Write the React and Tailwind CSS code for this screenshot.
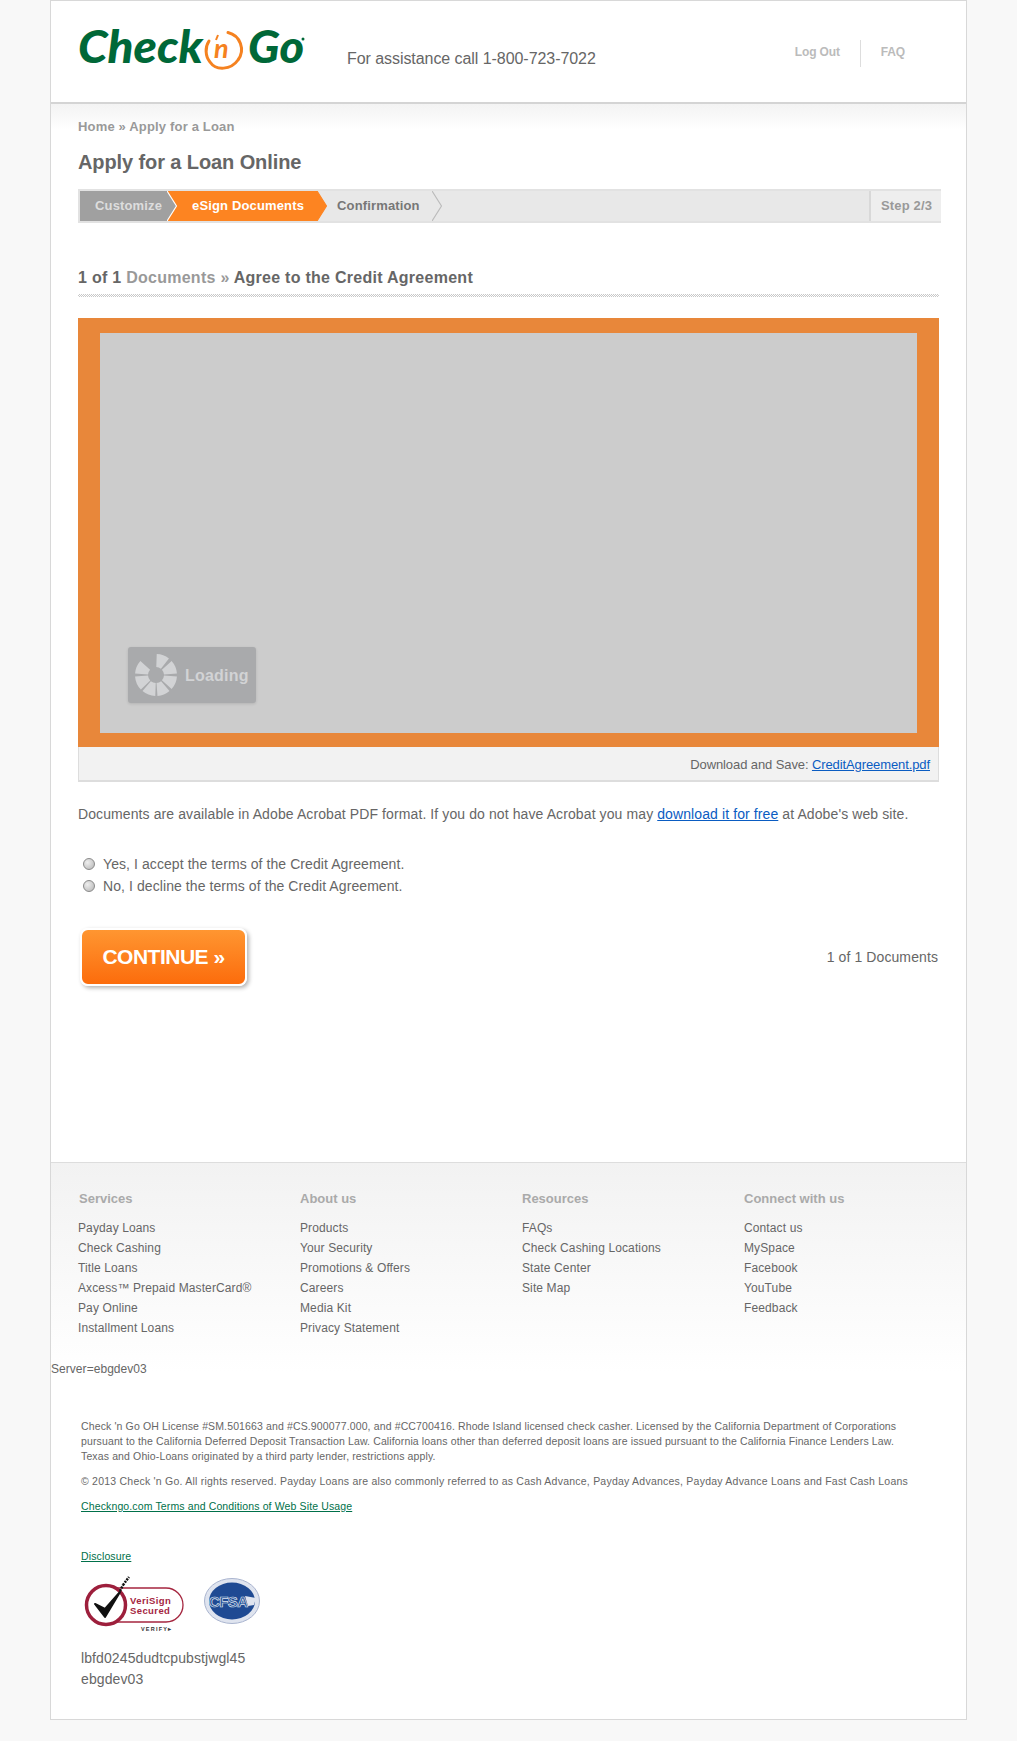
import React from 'react';

const footerColumns = [
  { title: 'Services', indent: 'pl-[1px]', links: ['Payday Loans', 'Check Cashing', 'Title Loans', 'Axcess™ Prepaid MasterCard®', 'Pay Online', 'Installment Loans'] },
  { title: 'About us', indent: '', links: ['Products', 'Your Security', 'Promotions & Offers', 'Careers', 'Media Kit', 'Privacy Statement'] },
  { title: 'Resources', indent: '', links: ['FAQs', 'Check Cashing Locations', 'State Center', 'Site Map'] },
  { title: 'Connect with us', indent: '', links: ['Contact us', 'MySpace', 'Facebook', 'YouTube', 'Feedback'] },
];

const Logo = () => (
  <svg width="232" height="44" viewBox="0 0 232 44" aria-label="Check n Go" className="overflow-visible">
    <text x="0" y="36" fontFamily="Lato, 'Open Sans', sans-serif" fontWeight="900" fontStyle="italic" fontSize="46" textLength="125" lengthAdjust="spacingAndGlyphs" fill="#006838">Check</text>
    <path d="M150 5.5 A17.5 17.5 0 0 1 160 33 C153 43 138 44 132 35 C127 29 127 20 131 14" fill="none" stroke="#f58220" strokeWidth="3" strokeLinecap="round" />
    <text x="136" y="31" fontFamily="Lato, 'Open Sans', sans-serif" fontWeight="700" fontStyle="italic" fontSize="27" fill="#f58220">n</text>
    <path d="M140 8 L138 13" stroke="#f58220" strokeWidth="2" />
    <text x="170" y="36" fontFamily="Lato, 'Open Sans', sans-serif" fontWeight="900" fontStyle="italic" fontSize="46" textLength="56" lengthAdjust="spacingAndGlyphs" fill="#006838">Go</text>
    <circle cx="225" cy="12" r="1.5" fill="#006838" />
  </svg>
);

const Chevron = ({ fill, bg, stroke }) => (
  <svg width="10" height="30" viewBox="0 0 10 30" className="shrink-0" style={{ background: bg }}>
    <path d="M0 0 L9.5 15 L0 30 Z" fill={fill} />
    <path d="M0 0 L9.5 15 L0 30" fill="none" stroke={stroke} strokeWidth="1.2" />
  </svg>
);

const Spinner = () => {
  const arcs = [[2, 38], [48, 86], [94, 132], [140, 176], [182, 220], [226, 266], [274, 312]];
  const point = (deg, r) => {
    const rad = ((deg - 90) * Math.PI) / 180;
    return `${21 + r * Math.cos(rad)} ${21 + r * Math.sin(rad)}`;
  };
  return (
    <svg width="42" height="42" viewBox="0 0 42 42">
      {arcs.map(([a, b]) => (
        <path key={a} d={`M${point(a, 14.5)} A14.5 14.5 0 0 1 ${point(b, 14.5)}`} fill="none" stroke="#d2d3d5" strokeWidth="13" />
      ))}
    </svg>
  );
};

const VeriSign = () => (
  <svg width="100" height="58" viewBox="0 0 100 58">
    <path d="M30 12 H82 A17 17 0 0 1 82 46 H30" fill="#fff" stroke="#a5263f" strokeWidth="1.3" />
    <circle cx="22" cy="29" r="19.5" fill="#fff" stroke="#9d1f3c" strokeWidth="3.5" />
    <path d="M11 28 L21 41 L36 16 L21 33 Z" fill="#111" stroke="#111" strokeWidth="2" strokeLinejoin="round" />
    <path d="M36 15 L39 9 M39 9 L45 1" stroke="#111" strokeWidth="2.5" strokeDasharray="2 1" />
    <text x="46" y="28" fontFamily="'Liberation Sans', sans-serif" fontWeight="700" fontSize="9.5" letterSpacing="0.4" fill="#a5263f">VeriSign</text>
    <text x="46" y="38" fontFamily="'Liberation Sans', sans-serif" fontWeight="700" fontSize="9.5" letterSpacing="0.4" fill="#a5263f">Secured</text>
    <text x="57" y="55" fontFamily="'Liberation Sans', sans-serif" fontWeight="700" fontSize="5.5" letterSpacing="1.2" fill="#333">VERIFY▸</text>
  </svg>
);

const Cfsa = () => (
  <svg width="56" height="46" viewBox="0 0 56 46">
    <ellipse cx="28" cy="23" rx="27.5" ry="22.5" fill="#dfe4ef" stroke="#a9b4cf" />
    <ellipse cx="28" cy="23" rx="23" ry="18.5" fill="#1f4a93" />
    <text x="5" y="29" fontFamily="'Liberation Sans', sans-serif" fontWeight="700" fontSize="15" letterSpacing="-0.6" fill="#1f4a93" stroke="#dfe4ef" strokeWidth="0.7">CFSA</text>
    <path d="M41 18 L52 20 L50 27 L44 28 Z" fill="#dfe4ef" />
  </svg>
);

const App = () => {
  return (
    <div className="min-h-[1741px] bg-[#f8f8f8] font-['Liberation_Sans',Arial,sans-serif] text-[#666]">
      <div className="ml-[50px] w-[917px] h-[1720px] border border-[#d8d8d8] bg-white">
        {/* Header */}
        <header className="h-[103px] border-b-2 border-[#d4d4d4] flex items-start">
          <div className="ml-[27px] mt-[26px] w-[269px]">
            <Logo />
          </div>
          <p className="mt-[48px] text-base leading-[20px] tracking-[-0.06px] text-[#666]">For assistance call 1-800-723-7022</p>
          <nav className="ml-auto mr-[61px] mt-[39px] flex items-start text-xs font-bold tracking-[-0.15px] text-[#bbb]">
            <a className="mt-[5px] leading-[14px]">Log Out</a>
            <span className="w-px h-[27px] bg-[#ddd] mx-[20px]"></span>
            <a className="mt-[5px] leading-[14px]">FAQ</a>
          </nav>
        </header>

        {/* Main content */}
        <main className="h-[1058px] px-[27px] bg-[linear-gradient(#f3f3f3,#fff_26px)]">
          <p className="pt-[13px] text-[13px] leading-[20px] tracking-[0.17px] font-bold text-[#999]">Home » Apply for a Loan</p>
          <h1 className="mt-[11px] text-xl leading-[28px] tracking-[-0.1px] font-bold text-[#666]">Apply for a Loan Online</h1>

          {/* Step bar */}
          <div className="mt-[13px] w-[863px] h-[34px] border-y-2 border-l-2 border-[#e2e2e2] flex items-stretch text-[13px] tracking-[0.15px] font-bold bg-[#e8e8e8]">
            <span className="w-[87px] pl-[15px] leading-[30px] bg-[#a0a0a0] text-[#ddd]">Customize</span>
            <Chevron fill="#a0a0a0" bg="#fd8421" stroke="#fff" />
            <span className="w-[140px] pl-[15px] leading-[30px] bg-[#fd8421] text-white">eSign Documents</span>
            <Chevron fill="#fd8421" bg="#e8e8e8" stroke="#fd8421" />
            <span className="w-[105px] pl-[10px] leading-[30px] text-[#777]">Confirmation</span>
            <Chevron fill="#e8e8e8" bg="#e8e8e8" stroke="#bbb" />
            <span className="ml-auto w-[72px] pl-[10px] leading-[30px] border-l-2 border-[#d8d8d8] bg-[#eee] text-[#999]">Step 2/3</span>
          </div>

          {/* Document heading */}
          <h2 className="mt-[44px] w-[861px] pb-[5px] text-base leading-[22px] tracking-[0.27px] font-bold text-[#666]">
            1 of 1 <span className="text-[#999]">Documents »</span> Agree to the Credit Agreement
          </h2>
          <div className="w-[861px] h-[3px] bg-[repeating-conic-gradient(#c8c8c8_0_25%,#fff_0_50%)] bg-[length:2px_2px]"></div>

          {/* Document viewer */}
          <div className="mt-[21px] w-[861px] h-[429px] bg-[#e8873a] px-[22px] pt-[15px]">
            <div className="relative h-[400px] bg-[#cccccc]">
              <div className="absolute left-[28px] top-[314px] w-[128px] h-[56px] rounded-[3px] bg-[#a9aaac] shadow-[0_1px_3px_rgba(0,0,0,0.12)] flex items-center pl-[7px] gap-[8px]">
                <Spinner />
                <span className="mt-[1px] text-base font-bold tracking-[0.2px] text-[#d2d3d5]">Loading</span>
              </div>
            </div>
          </div>
          <div className="w-[861px] h-[35px] border-x border-b-2 border-[#ddd] bg-[#f2f2f2] pr-[8px] text-right text-[13px] tracking-[-0.1px] leading-[35px]">
            Download and Save: <a className="text-[#0a5cc2] underline">CreditAgreement.pdf</a>
          </div>

          <p className="mt-[22px] text-sm leading-[20px] tracking-[0.1px]">
            Documents are available in Adobe Acrobat PDF format. If you do not have Acrobat you may{' '}
            <a className="text-[#0a5cc2] underline">download it for free</a> at Adobe's web site.
          </p>

          {/* Accept / decline */}
          <div className="mt-[30px] flex flex-col gap-[2px] text-sm leading-[20px] tracking-[0.08px]">
            {['Yes, I accept the terms of the Credit Agreement.', 'No, I decline the terms of the Credit Agreement.'].map(label => (
              <label key={label} className="flex items-center">
                <input
                  type="radio"
                  name="accept"
                  className="appearance-none ml-[5px] mr-[8px] w-[12px] h-[12px] rounded-full border border-[#8a8a8a] bg-[radial-gradient(circle_at_35%_35%,#eee,#b4b4b4)]"
                />
                {label}
              </label>
            ))}
          </div>

          {/* Continue */}
          <div className="mt-[32px] w-[860px] flex items-center justify-between">
            <button className="ml-[2px] w-[167px] h-[58px] rounded-[8px] border-2 border-white bg-[linear-gradient(#ff9631,#fc6c0c)] text-white text-[21px] tracking-[-0.5px] font-bold shadow-[2px_2px_4px_rgba(0,0,0,0.3)]">
              CONTINUE »
            </button>
            <span className="text-sm tracking-[0.1px]">1 of 1 Documents</span>
          </div>
        </main>

        {/* Footer */}
        <footer className="border-t border-[#ddd] bg-[linear-gradient(#f2f2f2,#fff_210px)] h-[557px]">
          <div className="pl-[27px] pt-[26px] grid grid-cols-[222px_222px_222px_1fr]">
            {footerColumns.map(col => (
              <div key={col.title}>
                <h3 className={`${col.indent} text-[13px] leading-[20px] font-bold text-[#aaa]`}>{col.title}</h3>
                <ul className="mt-[9px] text-xs leading-[20px] tracking-[0.12px]">
                  {col.links.map(link => (
                    <li key={link}>{link}</li>
                  ))}
                </ul>
              </div>
            ))}
          </div>

          <p className="mt-[21px] text-xs leading-[20px] tracking-[0.05px]">Server=ebgdev03</p>

          <div className="mt-[40px] px-[30px] text-[10.5px] leading-[15px]">
            <p className="tracking-[0.13px]">
              Check 'n Go OH License #SM.501663 and #CS.900077.000, and #CC700416. Rhode Island licensed check casher. Licensed by the California Department of Corporations<br />
              pursuant to the California Deferred Deposit Transaction Law. California loans other than deferred deposit loans are issued pursuant to the California Finance Lenders Law.<br />
              Texas and Ohio-Loans originated by a third party lender, restrictions apply.
            </p>
            <p className="mt-[10px] tracking-[0.23px]">© 2013 Check 'n Go. All rights reserved. Payday Loans are also commonly referred to as Cash Advance, Payday Advances, Payday Advance Loans and Fast Cash Loans</p>
            <a className="block mt-[10px] tracking-[0.13px] text-[#00704a] underline">Checkngo.com Terms and Conditions of Web Site Usage</a>
            <a className="block mt-[35px] tracking-[0.13px] text-[#00704a] underline">Disclosure</a>
            <div className="mt-[12px] ml-[3px] flex items-start gap-[20px]">
              <VeriSign />
              <div className="mt-[2px]"><Cfsa /></div>
            </div>
            <p className="mt-[14px] text-sm leading-[21px] tracking-[0.1px]">lbfd0245dudtcpubstjwgl45</p>
            <p className="text-sm leading-[21px] tracking-[0.1px]">ebgdev03</p>
          </div>
        </footer>
      </div>
    </div>
  );
};

export default App;
